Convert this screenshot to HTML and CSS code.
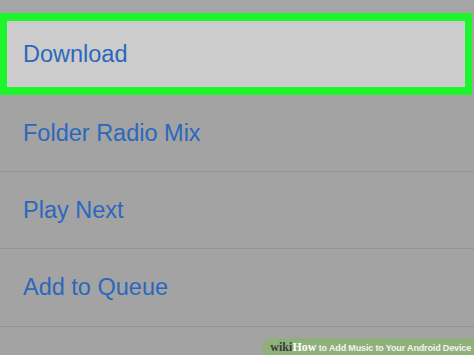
FILE: index.html
```html
<!DOCTYPE html>
<html>
<head>
<meta charset="utf-8">
<link rel="stylesheet" href="styles.css">
</head>
<body>
<div class="screen">
  <div class="top-strip"></div>
  <ul class="menu">
    <li class="item item-selected"><span class="label">Download</span></li>
    <li class="item"><span class="label">Folder Radio Mix</span></li>
    <li class="item"><span class="label">Play Next</span></li>
    <li class="item item-last"><span class="label">Add to Queue</span></li>
  </ul>
  <div class="watermark"><span class="wm-wiki">wiki</span><span class="wm-how">How</span><span class="wm-rest"> to Add Music to Your Android Device</span></div>
</div>
</body>
</html>
```

FILE: styles.css
```css
html, body {
  margin: 0;
  padding: 0;
}
body {
  background: #a3a3a3;
  font-family: "Liberation Sans", Arial, sans-serif;
}
.screen {
  position: relative;
  width: 474px;
  height: 355px;
  overflow: hidden;
  background: #a3a3a3;
}
.top-strip {
  height: 13px;
  background: #a5a5a5;
}
.menu {
  list-style: none;
  margin: 0;
  padding: 0;
}
.item {
  display: flex;
  align-items: center;
  height: 76px;
  padding-left: 23px;
  border-bottom: 1px solid #939393;
  box-sizing: content-box;
}
.item-last {
  height: 77px;
}
.item-selected {
  height: 66px;
  width: 442px;
  padding-left: 16px;
  background: #cccccc;
  border: 8px solid #1ef52c;
  border-left-width: 7px;
  border-right-width: 7px;
}
.label {
  font-size: 23.5px;
  color: #2b68bd;
}
.watermark {
  position: absolute;
  right: 0;
  bottom: 0;
  height: 17px;
  line-height: 19px;
  padding: 0 3px 0 7px;
  background: #8fb07b;
  border-top-left-radius: 8px;
  box-sizing: border-box;
  font-weight: bold;
  white-space: nowrap;
  font-size: 9px;
}
.wm-wiki {
  font-family: "Liberation Serif", "Times New Roman", serif;
  color: #3b3b3b;
  font-size: 12px;
}
.wm-how {
  font-family: "Liberation Serif", "Times New Roman", serif;
  color: #ffffff;
  font-size: 12px;
}
.wm-rest {
  font-size: 9px;
  letter-spacing: -0.15px;
  color: #f4f4f4;
  white-space: pre;
}
```
